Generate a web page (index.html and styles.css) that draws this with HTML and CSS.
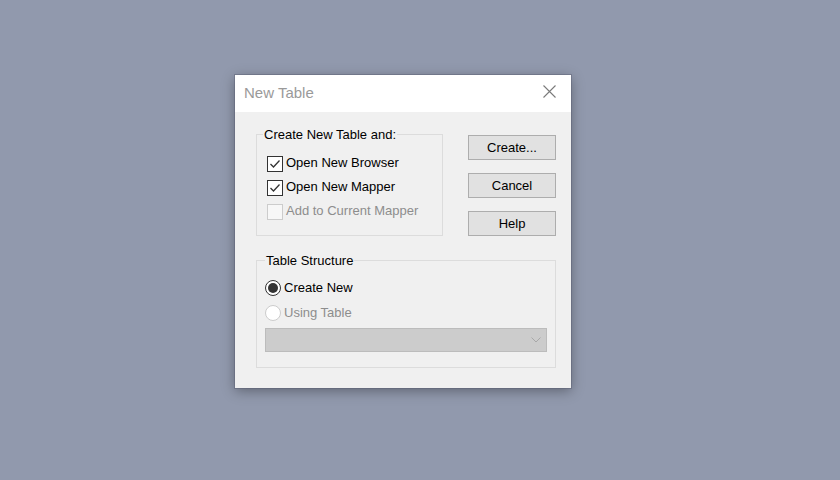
FILE: index.html
```html
<!DOCTYPE html>
<html>
<head>
<meta charset="utf-8">
<link rel="stylesheet" href="styles.css">
</head>
<body>
<div class="dialog">
  <div class="titlebar">
    <span class="title">New Table</span>
    <svg class="close" width="13" height="13" viewBox="0 0 13 13"><path d="M0.5 0.5 L12.5 12.5 M12.5 0.5 L0.5 12.5" stroke="#7a7a7a" stroke-width="1.1" fill="none"/></svg>
  </div>
  <div class="body">
    <div class="toprow">
      <div class="group group1">
        <span class="legend">Create New Table and:</span>
        <div class="row"><span class="check on"><svg width="14" height="14" viewBox="0 0 14 14"><path d="M2.5 7 L5.5 10 L11.5 3.5" stroke="#333" stroke-width="1.3" fill="none"/></svg></span><span>Open New Browser</span></div>
        <div class="row"><span class="check on"><svg width="14" height="14" viewBox="0 0 14 14"><path d="M2.5 7 L5.5 10 L11.5 3.5" stroke="#333" stroke-width="1.3" fill="none"/></svg></span><span>Open New Mapper</span></div>
        <div class="row disabled"><span class="check off"></span><span>Add to Current Mapper</span></div>
      </div>
      <div class="buttons">
        <div class="btn">Create...</div>
        <div class="btn">Cancel</div>
        <div class="btn">Help</div>
      </div>
    </div>
    <div class="group group2">
      <span class="legend">Table Structure</span>
      <div class="row r"><span class="radio on"><span class="dot"></span></span><span>Create New</span></div>
      <div class="row r disabled"><span class="radio off"></span><span>Using Table</span></div>
      <div class="combo">
        <svg width="10" height="6" viewBox="0 0 10 6"><path d="M0.5 0.5 L5 5 L9.5 0.5" stroke="#a8a8a8" stroke-width="1" fill="none"/></svg>
      </div>
    </div>
  </div>
</div>
</body>
</html>
```
FILE: styles.css
```css
html, body {
  margin: 0;
  padding: 0;
}
body {
  background: #9199ad;
  width: 840px;
  height: 480px;
  overflow: hidden;
  font-family: "Liberation Sans", Arial, sans-serif;
  font-size: 13px;
  color: #000;
}
.dialog {
  margin: 75px 0 0 235px;
  width: 336px;
  height: 313px;
  background: #f0f0f0;
  box-shadow: 0 0 0 1px rgba(90, 95, 115, 0.45), 0 3px 12px rgba(0, 0, 0, 0.35);
  display: flex;
  flex-direction: column;
}
.titlebar {
  height: 37px;
  box-sizing: border-box;
  background: #fff;
  display: flex;
  align-items: flex-start;
  justify-content: space-between;
  padding: 9px 15px 0 9px;
}
.title {
  font-size: 15px;
  line-height: 17px;
  color: #9a9a9a;
}
.close {
  display: block;
  margin-top: 1px;
}
.body {
  padding: 22px 15px 20px 21px;
  display: flex;
  flex-direction: column;
}
.toprow {
  display: flex;
  gap: 25px;
}
.group {
  position: relative;
  border: 1px solid #dcdcdc;
  box-sizing: border-box;
}
.legend {
  position: absolute;
  top: -8px;
  left: 6px;
  padding: 0 1px;
  background: #f0f0f0;
  line-height: 15px;
}
.group1 {
  width: 187px;
  height: 102px;
  padding: 15px 0 0 10px;
}
.group2 {
  margin-top: 24px;
  width: 300px;
  height: 108px;
  padding: 14px 8px 0 8px;
}
.group2 .legend {
  left: 8px;
}
.row {
  height: 24px;
  display: flex;
  align-items: center;
  gap: 3px;
}
.row.r {
  height: 25px;
  gap: 3px;
}
.disabled {
  color: #8d8d8d;
}
.check {
  width: 16px;
  height: 16px;
  margin-top: 3px;
  box-sizing: border-box;
  border: 1px solid #333;
  background: #fff;
  display: flex;
  align-items: center;
  justify-content: center;
}
.check svg {
  display: block;
}
.check.off {
  border-color: #cccccc;
  background: #f7f7f7;
}
.radio {
  width: 16px;
  height: 16px;
  box-sizing: border-box;
  border-radius: 50%;
  border: 1px solid #333;
  background: #fff;
  display: flex;
  align-items: center;
  justify-content: center;
}
.radio .dot {
  width: 10px;
  height: 10px;
  border-radius: 50%;
  background: #333;
}
.radio.off {
  border-color: #cccccc;
}
.combo {
  margin-top: 3px;
  height: 24px;
  box-sizing: border-box;
  border: 1px solid #bcbcbc;
  background: #cccccc;
  display: flex;
  align-items: center;
  justify-content: flex-end;
  padding-right: 5px;
}
.combo svg {
  display: block;
}
.buttons {
  margin-top: 1px;
  display: flex;
  flex-direction: column;
  gap: 13px;
}
.btn {
  width: 88px;
  height: 25px;
  box-sizing: border-box;
  border: 1px solid #adadad;
  background: #e1e1e1;
  display: flex;
  align-items: center;
  justify-content: center;
}
```
